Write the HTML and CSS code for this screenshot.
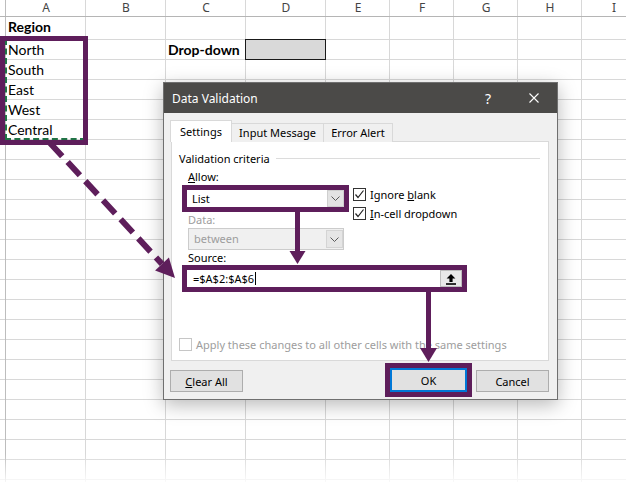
FILE: index.html
```html
<!DOCTYPE html>
<html>
<head>
<meta charset="utf-8">
<title>Data Validation</title>
<link rel="stylesheet" href="styles.css">
</head>
<body>
<div class="sheet">
  <div class="cols colhead">
    <div></div><div>A</div><div>B</div><div>C</div><div>D</div><div>E</div><div>F</div><div>G</div><div>H</div><div>I</div>
  </div>
  <div class="cols row1">
    <div></div><div class="cell bold">Region</div>
  </div>
  <div class="cols body">
    <div class="cell ca r1">North</div>
    <div class="cell ca r2">South</div>
    <div class="cell ca r3">East</div>
    <div class="cell ca r4">West</div>
    <div class="cell ca r5">Central</div>
    <div class="ants"></div>
    <div class="cell bold cc r1">Drop-down</div>
    <div class="dropcell"></div>
  </div>
</div>

<div class="mark-a"></div>

<div class="dialog">
  <div class="titlebar">
    <span class="title">Data Validation</span>
    <span class="tbtn help">?</span>
    <span class="tbtn close"><svg width="10" height="10" viewBox="0 0 10 10"><path d="M0.5 0.5 L9.5 9.5 M9.5 0.5 L0.5 9.5" stroke="#fff" stroke-width="1.1" fill="none"/></svg></span>
  </div>
  <div class="tabs">
    <div class="tab active">Settings</div>
    <div class="tab t2">Input Message</div>
    <div class="tab t3">Error Alert</div>
  </div>
  <div class="panel">
    <div class="legend"><span>Validation criteria</span><span class="rule"></span></div>
    <div class="criteria">
      <div class="lbl"><u>A</u>llow:</div>
      <div class="hl hl-allow">
        <div class="combo">
          <span class="ctext">List</span>
          <span class="dd"><svg width="9" height="5" viewBox="0 0 9 5"><polyline points="0.5,0.5 4.5,4.5 8.5,0.5" fill="none" stroke="#5a5a5a" stroke-width="1"/></svg></span>
        </div>
      </div>
      <div class="checks">
        <div class="chk"><span class="box"><svg width="11" height="11" viewBox="0 0 11 11"><polyline points="1.5,5.5 4,8.5 9.5,1.5" fill="none" stroke="#222" stroke-width="1.2"/></svg></span><span>Ignore <u>b</u>lank</span></div>
        <div class="chk"><span class="box"><svg width="11" height="11" viewBox="0 0 11 11"><polyline points="1.5,5.5 4,8.5 9.5,1.5" fill="none" stroke="#222" stroke-width="1.2"/></svg></span><span><u>I</u>n-cell dropdown</span></div>
      </div>
      <div class="lbl dis">Data:</div>
      <div class="combo combo-dis">
        <span class="ctext">between</span>
        <span class="dd"><svg width="9" height="5" viewBox="0 0 9 5"><polyline points="0.5,0.5 4.5,4.5 8.5,0.5" fill="none" stroke="#5a5a5a" stroke-width="1"/></svg></span>
      </div>
      <div class="lbl lbl-src">Source:</div>
      <div class="hl hl-src">
        <div class="refedit">
          <span class="ctext src">=$A$2:$A$6<span class="caret"></span></span>
          <span class="refbtn"><svg width="12" height="12" viewBox="0 0 12 12"><path d="M6 1 L1.6 5.6 H4.4 V9 H7.6 V5.6 H10.4 Z" fill="#000"/><rect x="1" y="10.2" width="10" height="1.6" fill="#000"/></svg></span>
        </div>
      </div>
    </div>
    <div class="apply"><span class="box box-dis"></span><span>Apply these changes to all other cells with the same settings</span></div>
  </div>
  <div class="buttons">
    <button class="btn"><u>C</u>lear All</button>
    <div class="hl hl-ok"><button class="btn btn-default">OK</button></div>
    <button class="btn btn-cancel">Cancel</button>
  </div>
</div>

<svg class="arrows" width="626" height="482" viewBox="0 0 626 482">
  <line x1="50" y1="143" x2="162" y2="264" stroke="#5e1e5b" stroke-width="6" stroke-dasharray="18 8"/>
  <polygon points="175,278 155.1,270.6 168.9,257.6" fill="#5e1e5b"/>
  <rect x="295" y="211" width="5" height="41" fill="#5e1e5b"/>
  <polygon points="289.5,251 305.5,251 297.5,264" fill="#5e1e5b"/>
  <rect x="426" y="291" width="5" height="58" fill="#5e1e5b"/>
  <polygon points="420,348 437,348 428.5,362" fill="#5e1e5b"/>
</svg>

<div class="fade"></div>
</body>
</html>
```

FILE: styles.css
```css
* { box-sizing: border-box; margin: 0; padding: 0; }
:root {
  --purple: #5e1e5b;
  --grid: #d8d8d8;
  --vlines: linear-gradient(to right,
    transparent 5px, #bdbdbd 5px 6px,
    transparent 6px 85px, var(--grid) 85px 86px,
    transparent 86px 165px, var(--grid) 165px 166px,
    transparent 166px 245px, var(--grid) 245px 246px,
    transparent 246px 325px, var(--grid) 325px 326px,
    transparent 326px 389px, var(--grid) 389px 390px,
    transparent 390px 453px, var(--grid) 453px 454px,
    transparent 454px 517px, var(--grid) 517px 518px,
    transparent 518px 581px, var(--grid) 581px 582px,
    transparent 582px);
}
html, body { width: 626px; height: 482px; overflow: hidden; background: #fff; }
body { position: relative; font-family: Lato, "Liberation Sans", sans-serif; }

.sheet { width: 626px; height: 482px; overflow: hidden; }
.cols {
  display: grid;
  grid-template-columns: 6px 80px 80px 80px 80px 64px 64px 64px 64px 64px;
  width: 646px;
}
.colhead {
  height: 17px;
  border-bottom: 1px solid #b5b5b5;
  background-image: var(--vlines);
  font-family: "Noto Sans", sans-serif;
  font-size: 12px;
  line-height: 16px;
  color: #444;
  text-align: center;
}
.row1 {
  height: 23px;
  border-bottom: 1px solid var(--grid);
  background-image: var(--vlines);
}
.body {
  height: 442px;
  grid-auto-rows: 20px;
  background-image: var(--vlines),
    repeating-linear-gradient(to bottom, transparent 0 19px, var(--grid) 19px 20px);
}
.cell { font-size: 14px; line-height: 20px; padding-left: 2px; color: #000; white-space: nowrap; }
.bold { font-weight: 700; }
.row1 .cell { grid-column: 2; }
.ca { grid-column: 2; }
.cc { grid-column: 4; }
.r1 { grid-row: 1; }
.r2 { grid-row: 2; }
.r3 { grid-row: 3; }
.r4 { grid-row: 4; }
.r5 { grid-row: 5; }
.ants {
  grid-column: 2;
  grid-row: 1 / 6;
  margin: -1px 0 0 -1px;
  border: 2px dashed #217346;
}
.dropcell {
  grid-column: 5;
  grid-row: 1;
  margin: -1px 0 0 -1px;
  background: #d9d9d9;
  border: 1px solid #1a1a1a;
}

.mark-a {
  position: absolute;
  left: 0; top: 36px;
  width: 88px; height: 109px;
  border: 5px solid var(--purple);
}

/* dialog */
.dialog {
  position: absolute;
  left: 163px; top: 82px;
  width: 395px; height: 318px;
  background: #f0f0f0;
  border: 1px solid #6f6f6f;
  box-shadow: 0 5px 18px rgba(0,0,0,.28);
  font-family: "Noto Sans", sans-serif;
  font-size: 11px;
  color: #000;
  display: flex;
  flex-direction: column;
  z-index: 5;
}
.titlebar {
  height: 30px;
  background: #4b4a48;
  color: #fff;
  display: flex;
  align-items: center;
}
.title { flex: 1; padding-left: 8px; font-size: 12px; }
.tbtn { width: 46px; height: 30px; display: flex; align-items: center; justify-content: center; }
.help { font-size: 14px; }

.tabs {
  display: flex;
  align-items: flex-end;
  margin: 7px 0 -1px 6px;
  position: relative;
  z-index: 1;
}
.tab {
  height: 19px;
  border: 1px solid #d9d9d9;
  border-bottom: none;
  background: #f0f0f0;
  text-align: center;
  line-height: 18px;
}
.tab.active { width: 62px; height: 22px; background: #fff; line-height: 21px; }
.t2 { width: 92px; border-left: none; }
.t3 { width: 69px; border-left: none; }

.panel {
  height: 220px;
  margin: 0 8px 0 7px;
  background: #fff;
  border: 1px solid #d9d9d9;
  display: flex;
  flex-direction: column;
}
.legend {
  display: flex;
  align-items: center;
  height: 16px;
  margin: 8px 8px 0 7px;
}
.rule { flex: 1; height: 1px; background: #dcdcdc; margin-left: 6px; }

.criteria {
  display: grid;
  grid-template-columns: 171px 1fr;
  grid-template-rows: 16px 27px 16px 22px 15px 27px;
  margin: 3px 0 0 10px;
}
.lbl { grid-column: 1; height: 16px; line-height: 16px; margin-left: 6px; }
.lbl.dis { color: #9d9d9d; }
.lbl-src { height: 15px; }
.hl { border: 5px solid var(--purple); }
.hl-allow { grid-column: 1; width: 167px; height: 27px; }
.hl-src { grid-column: 1 / 3; width: 285px; height: 27px; }

.checks { grid-column: 2; grid-row: 2 / 5; padding-top: 3px; }
.chk { display: flex; align-items: center; height: 13px; margin-bottom: 6px; white-space: nowrap; }

.combo { display: flex; background: #fff; height: 100%; }
.ctext { flex: 1; padding-left: 5px; line-height: 17px; white-space: nowrap; }
.dd {
  width: 17px;
  background: #e3e3e3;
  border: 1px solid #cfcfcf;
  display: flex;
  align-items: center;
  justify-content: center;
}
.combo-dis {
  grid-column: 1;
  width: 156px;
  height: 22px;
  margin-left: 6px;
  background: #f0f0f0;
  border: 1px solid #cccccc;
  color: #9d9d9d;
}
.combo-dis .ctext { line-height: 20px; }
.combo-dis .dd { background: #e6e6e6; border-color: #d4d4d4; margin: 1px 0; }

.refedit { display: flex; background: #fff; height: 100%; }
.src { padding-left: 6px; display: flex; align-items: center; }
.caret { width: 1px; height: 13px; background: #000; margin-left: 1px; }
.refbtn {
  width: 22px;
  background: #e8e8e8;
  border: 1px solid #bdbdbd;
  display: flex;
  align-items: center;
  justify-content: center;
}

.box {
  width: 13px; height: 13px;
  flex: none;
  border: 1px solid #333;
  background: #fff;
  margin-right: 4px;
  display: flex;
  align-items: center;
  justify-content: center;
}
.box-dis { border-color: #c6c6c6; }

.apply {
  display: flex;
  align-items: center;
  height: 13px;
  margin: auto 0 9px 7px;
  color: #9d9d9d;
  white-space: nowrap;
}

.buttons {
  display: flex;
  align-items: flex-start;
  height: 34px;
  margin: 2px 8px 0 6px;
}
.btn {
  width: 73px;
  height: 22px;
  margin-top: 7px;
  background: #e1e1e1;
  border: 1px solid #adadad;
  font-family: inherit;
  font-size: 11px;
  color: #000;
}
.hl-ok { margin-left: auto; width: 87px; height: 34px; }
.btn-default { width: 77px; height: 24px; margin-top: 0; border: 2px solid #0078d7; }
.btn-cancel { margin-left: 4px; }

.arrows { position: absolute; left: 0; top: 0; z-index: 10; }

.fade {
  position: absolute;
  left: 0; bottom: 0;
  width: 626px; height: 28px;
  background: linear-gradient(to bottom, rgba(255,255,255,0), rgba(255,255,255,.85));
  z-index: 2;
}
```
